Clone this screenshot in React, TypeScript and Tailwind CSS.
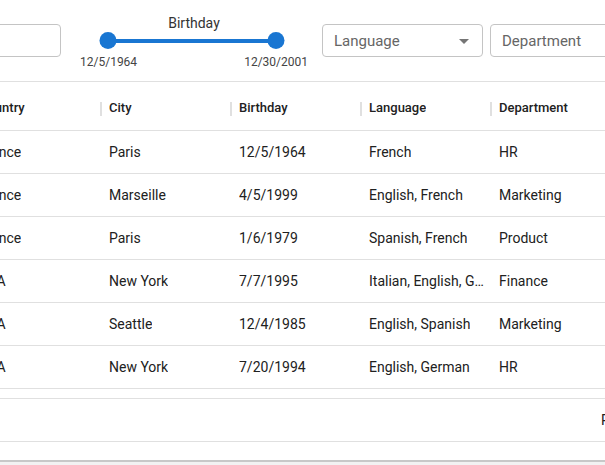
import { useState } from 'react';

type Employee = {
  id: number;
  country: string;
  city: string;
  birthday: string;
  language: string;
  department: string;
};

const rows: Employee[] = [
  { id: 1, country: 'France', city: 'Paris', birthday: '12/5/1964', language: 'French', department: 'HR' },
  { id: 2, country: 'France', city: 'Marseille', birthday: '4/5/1999', language: 'English, French', department: 'Marketing' },
  { id: 3, country: 'France', city: 'Paris', birthday: '1/6/1979', language: 'Spanish, French', department: 'Product' },
  { id: 4, country: 'USA', city: 'New York', birthday: '7/7/1995', language: 'Italian, English, German', department: 'Finance' },
  { id: 5, country: 'USA', city: 'Seattle', birthday: '12/4/1985', language: 'English, Spanish', department: 'Marketing' },
  { id: 6, country: 'USA', city: 'New York', birthday: '7/20/1994', language: 'English, German', department: 'HR' },
];

const columns: { key: keyof Employee; label: string }[] = [
  { key: 'country', label: 'Country' },
  { key: 'city', label: 'City' },
  { key: 'birthday', label: 'Birthday' },
  { key: 'language', label: 'Language' },
  { key: 'department', label: 'Department' },
];

function SelectField({ label, arrow }: { label: string; arrow?: boolean }) {
  return (
    <div className="flex items-center justify-between h-[33px] w-[161px] shrink-0 rounded border border-[#c4c4c4] pl-[11px] pr-[13px] pt-[1px]">
      <span className="text-[15px] text-[#666666]">{label}</span>
      {arrow && (
        <svg width="10" height="5" viewBox="0 0 10 5">
          <path d="M0 0 L5 5 L10 0 Z" fill="#757575" />
        </svg>
      )}
    </div>
  );
}

function RangeSlider() {
  return (
    <div className="ml-[19px] w-[228px] shrink-0 flex flex-col">
      <div className="text-center text-[14px] leading-[18px] text-[#333333] pt-[7px]">Birthday</div>
      <div className="relative h-[17px] ml-[28px] mr-[32px]">
        <div className="absolute left-0 right-0 top-[7px] h-[4px] bg-[#1976d2] rounded" />
        <div className="absolute left-0 top-0 w-[17px] h-[17px] -translate-x-1/2 rounded-full bg-[#1976d2]" />
        <div className="absolute right-0 top-0 w-[17px] h-[17px] translate-x-1/2 rounded-full bg-[#1976d2]" />
      </div>
      <div className="flex justify-between text-[12px] leading-[14px] text-[#444444] mt-[6px]">
        <span>12/5/1964</span>
        <span>12/30/2001</span>
      </div>
    </div>
  );
}

export default function App() {
  const [data] = useState(rows);

  return (
    <div className="w-[605px] h-[465px] overflow-hidden bg-white" style={{ fontFamily: 'Roboto, "Noto Sans", sans-serif' }}>
      {/* toolbar */}
      <div className="flex items-start h-[81px] pt-[24px]">
        <div className="h-[33px] w-[161px] -ml-[100px] shrink-0 rounded border border-[#c4c4c4]" />
        <div className="-mt-[17px]">
          <RangeSlider />
        </div>
        <div className="ml-[14px] flex gap-[7px]">
          <SelectField label="Language" arrow />
          <SelectField label="Department" />
        </div>
      </div>

      <div className="border-t border-[#e0e0e0]">
        <div className="-ml-[30px] w-[660px]">
          {/* header */}
          <div className="flex h-[49px] pt-[4px] border-b border-[#e0e0e0]">
            {columns.map((col, i) => (
              <div key={col.key} className="relative w-[130px] shrink-0 flex items-center pl-[9px] pr-[4px]">
                {i > 0 && <div className="absolute left-0 top-[16px] w-[2px] h-[14px] bg-[#e0e0e0]" />}
                <span className="text-[13px] font-medium text-[#212121] truncate">{col.label}</span>
              </div>
            ))}
          </div>
          {/* rows */}
          {data.map((row) => (
            <div key={row.id} className="flex h-[43px] border-b border-[#e0e0e0]">
              {columns.map((col) => (
                <div key={col.key} className="w-[130px] shrink-0 flex items-center pl-[9px] pr-[2px] overflow-hidden">
                  <span className="text-[14px] text-[#212121] truncate">{row[col.key]}</span>
                </div>
              ))}
            </div>
          ))}
        </div>
        <div className="h-[9px]" />
        {/* footer */}
        <div className="flex items-center h-[44px] border-t border-b border-[#e0e0e0] pl-[601px]">
          <span className="text-[14px] text-[#212121] whitespace-nowrap">Rows per page:</span>
        </div>
        <div className="h-[20px] border-b-2 border-[#c8c8c8]" />
        <div className="h-[4px] bg-[#f2f2f2]" />
      </div>
    </div>
  );
}
